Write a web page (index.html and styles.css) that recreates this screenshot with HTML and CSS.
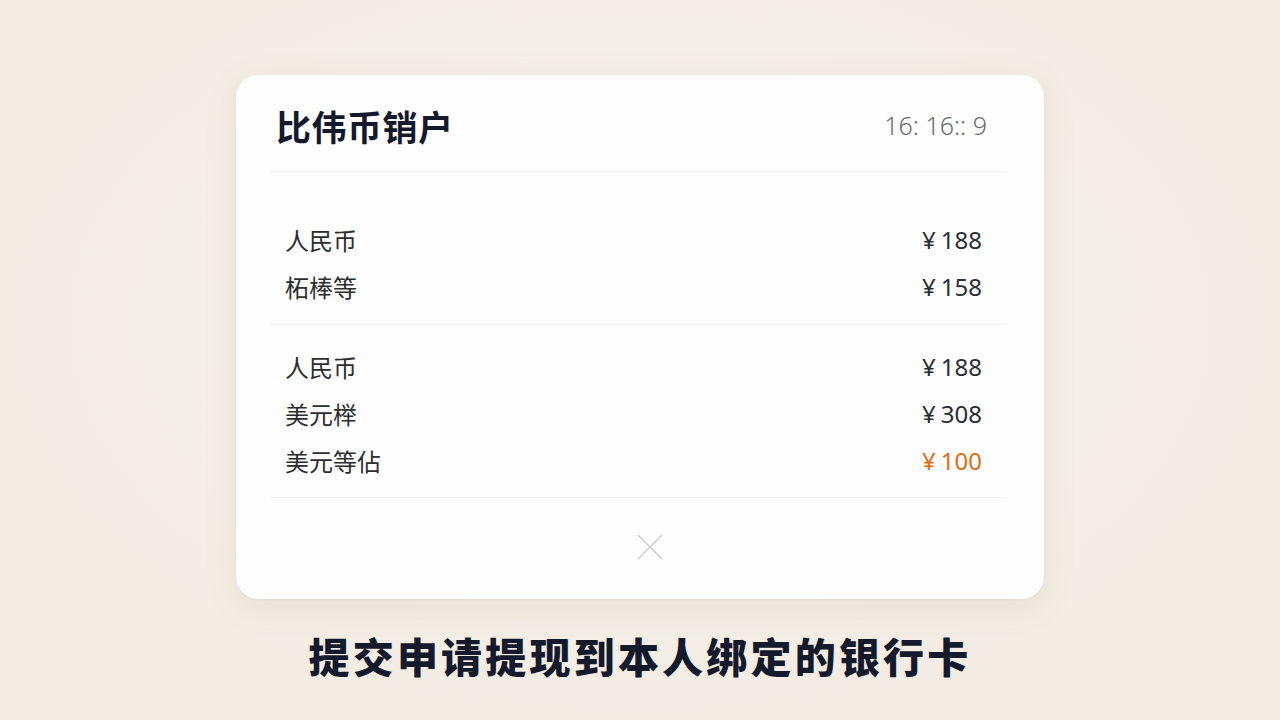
FILE: index.html
```html
<!DOCTYPE html>
<html lang="zh-CN">
<head>
    <meta charset="UTF-8">
    <meta name="viewport" content="width=device-width, initial-scale=1.0">
    <title>比伟币销户</title>
    <link rel="stylesheet" href="styles.css">
</head>
<body>
    <div class="stage">
        <div class="card">
            <div class="card-head">
                <h1 class="title">比伟币销户</h1>
                <span class="time">16: 16:: 9</span>
            </div>

            <div class="group group-first">
                <div class="row"><span>人民币</span><span class="amount"><i>¥</i>188</span></div>
                <div class="row"><span>柘棒等</span><span class="amount"><i>¥</i>158</span></div>
            </div>

            <div class="group group-second">
                <div class="row"><span>人民币</span><span class="amount"><i>¥</i>188</span></div>
                <div class="row"><span>美元榉</span><span class="amount"><i>¥</i>308</span></div>
                <div class="row"><span>美元等佔</span><span class="amount orange"><i>¥</i>100</span></div>
            </div>

            <div class="card-foot">
                <svg class="close" width="28" height="28" viewBox="0 0 28 28">
                    <path d="M2 2 L26 26 M26 2 L2 26" stroke="#cfcfcf" stroke-width="1.6" fill="none"/>
                </svg>
            </div>
        </div>

        <p class="caption">提交申请提现到本人绑定的银行卡</p>
    </div>
</body>
</html>
```

FILE: styles.css
```css
body {
    margin: 0;
    background-color: #f3ede4;
    font-family: "Noto Sans CJK SC", "Noto Sans", sans-serif;
}

.stage {
    width: 1280px;
    height: 720px;
    display: flex;
    flex-direction: column;
    align-items: center;
    padding-top: 75px;
    box-sizing: border-box;
    background: radial-gradient(ellipse at 50% 45%, #f5f1eb 0%, #f2ece3 80%);
}

.card {
    width: 808px;
    height: 524px;
    box-sizing: border-box;
    background-color: #fdfdfd;
    border-radius: 22px;
    box-shadow: rgba(120, 100, 70, 0.09) 0px 8px 36px 0px, rgba(0, 0, 0, 0.04) 0px 1px 3px;
    padding: 0 37px 0 35px;
    display: flex;
    flex-direction: column;
}

.card-head {
    display: flex;
    justify-content: space-between;
    align-items: center;
    height: 97px;
    padding: 4px 20px 0 5px;
    box-sizing: border-box;
    border-bottom: 1px solid #f0f0f0;
}

.title {
    margin: 0;
    font-size: 35px;
    font-weight: 700;
    color: #141a2b;
    letter-spacing: 0.5px;
}

.time {
    font-size: 25px;
    font-weight: 300;
    color: #6a6a6a;
    font-family: "Noto Sans", "Open Sans", sans-serif;
}

.group {
    border-bottom: 1px solid #f0f0f0;
    padding: 0 25px 0 14px;
}

.group-first {
    padding-top: 44px;
    padding-bottom: 14px;
}

.group-second {
    padding-top: 18px;
    padding-bottom: 13px;
}

.row {
    display: flex;
    justify-content: space-between;
    align-items: center;
    height: 47px;
    font-size: 24px;
    color: #2d2d2d;
}

.amount {
    font-family: "Noto Sans", "Open Sans", sans-serif;
    font-size: 24px;
    color: #2a2d35;
}

.amount i {
    font-style: normal;
    margin-right: 5px;
}

.orange {
    color: #e06d12;
}

.card-foot {
    flex: 1;
    display: flex;
    justify-content: center;
    align-items: center;
    padding-left: 22px;
}

.close {
    display: block;
    margin-bottom: 4px;
}

.caption {
    margin: 26px 0 0 0;
    font-size: 41px;
    font-weight: 900;
    color: #141a2b;
    letter-spacing: 3.2px;
}
```
